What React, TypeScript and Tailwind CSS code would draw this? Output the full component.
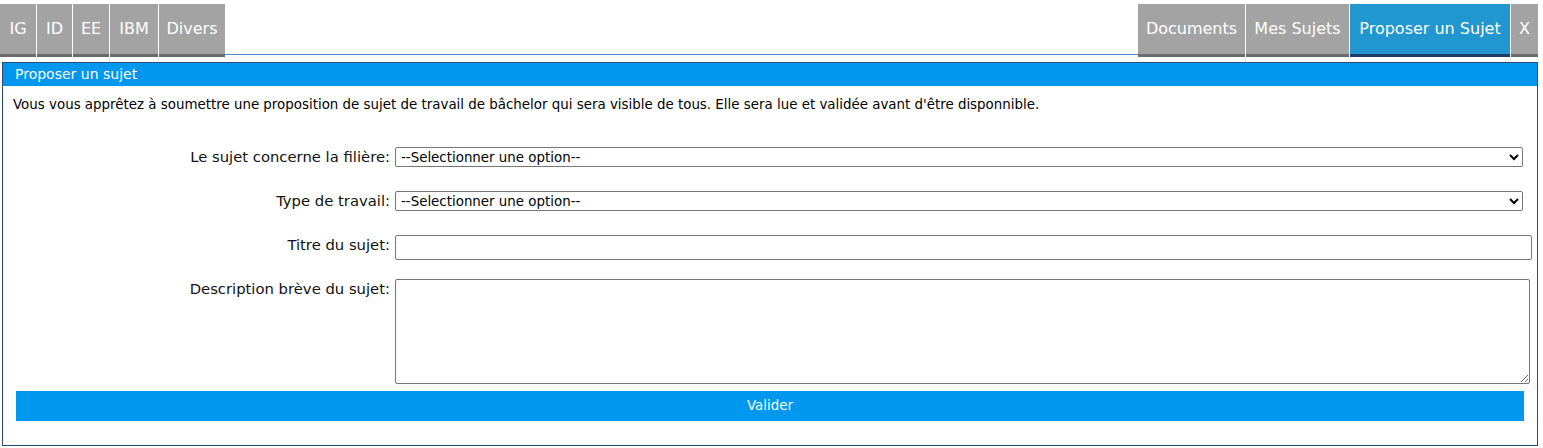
import React from "react";

const font = { fontFamily: "'DejaVu Sans', Verdana, sans-serif" };

const leftTabs = [
  { label: "IG", w: "w-[36px]" },
  { label: "ID", w: "w-[35px]" },
  { label: "EE", w: "w-[36px]" },
  { label: "IBM", w: "w-[48px]" },
  { label: "Divers", w: "w-[66px]" },
];
const rightTabs = [
  { label: "Documents", w: "w-[107px]" },
  { label: "Mes Sujets", w: "w-[103px]" },
  { label: "Proposer un Sujet", w: "w-[160px]" },
  { label: "X", w: "w-[27px]" },
];

function Tab({ label, w, active }: { label: string; w: string; active?: boolean }) {
  return (
    <div
      className={`${w} h-[53px] flex items-center justify-center text-[16px] text-white border-b-[3px] whitespace-nowrap ${
        active ? "bg-[#2196cf] border-[#1f3d66]" : "bg-[#a3a3a3] border-[#6b6b6b]"
      }`}
    >
      {label}
    </div>
  );
}

function Row({ label, children, className }: { label: string; children: React.ReactNode; className?: string }) {
  return (
    <div className={`flex items-start ${className ?? ""}`}>
      <label className="w-[392px] shrink-0 text-right pr-[5px] text-[14.8px] text-[#111] leading-[20px] whitespace-nowrap">
        {label}
      </label>
      {children}
    </div>
  );
}

export default function App() {
  return (
    <div className="w-[1543px] h-[448px] bg-white" style={font}>
      <div className="flex pr-[5px] pt-1">
        <div className="flex gap-px">
          {leftTabs.map((t) => (
            <Tab key={t.label} label={t.label} w={t.w} />
          ))}
        </div>
        <div className="flex-1 h-[51px] border-b border-[#4a8fd0]" />
        <div className="flex gap-px">
          {rightTabs.map((t) => (
            <Tab key={t.label} label={t.label} w={t.w} active={t.label === "Proposer un Sujet"} />
          ))}
        </div>
      </div>

      <div className="ml-[2px] mr-[5px] mt-[5px] h-[384px] border border-[#2b4a72]">
        <div className="h-[23px] bg-[#0097ef] text-white text-[14px] px-3 flex items-center">Proposer un sujet</div>
        <p className="px-[10px] pt-[9px] text-[13.4px] text-black whitespace-nowrap">
          Vous vous apprêtez à soumettre une proposition de sujet de travail de bâchelor qui sera visible de tous. Elle sera lue et validée avant d'être disponnible.
        </p>

        <Row label="Le sujet concerne la filière:" className="mt-[32px]">
          <select className="w-[1128px] h-[20px] border border-[#767676] rounded-[2px] text-[13.4px] text-black px-px">
            <option>--Selectionner une option--</option>
          </select>
        </Row>
        <Row label="Type de travail:" className="mt-[24px]">
          <select className="w-[1128px] h-[20px] border border-[#767676] rounded-[2px] text-[13.4px] text-black px-px">
            <option>--Selectionner une option--</option>
          </select>
        </Row>
        <Row label="Titre du sujet:" className="mt-[24px]">
          <input type="text" className="w-[1137px] h-[25px] border border-[#767676] rounded-[2px]" />
        </Row>
        <Row label="Description brève du sujet:" className="mt-[19px]">
          <textarea className="w-[1135px] h-[105px] border border-[#767676] rounded-[2px]" />
        </Row>

        <div className="px-[13px] mt-[7px]">
          <button className="w-[1508px] h-[30px] bg-[#0097ef] text-white text-[13.4px]">Valider</button>
        </div>
      </div>
    </div>
  );
}
